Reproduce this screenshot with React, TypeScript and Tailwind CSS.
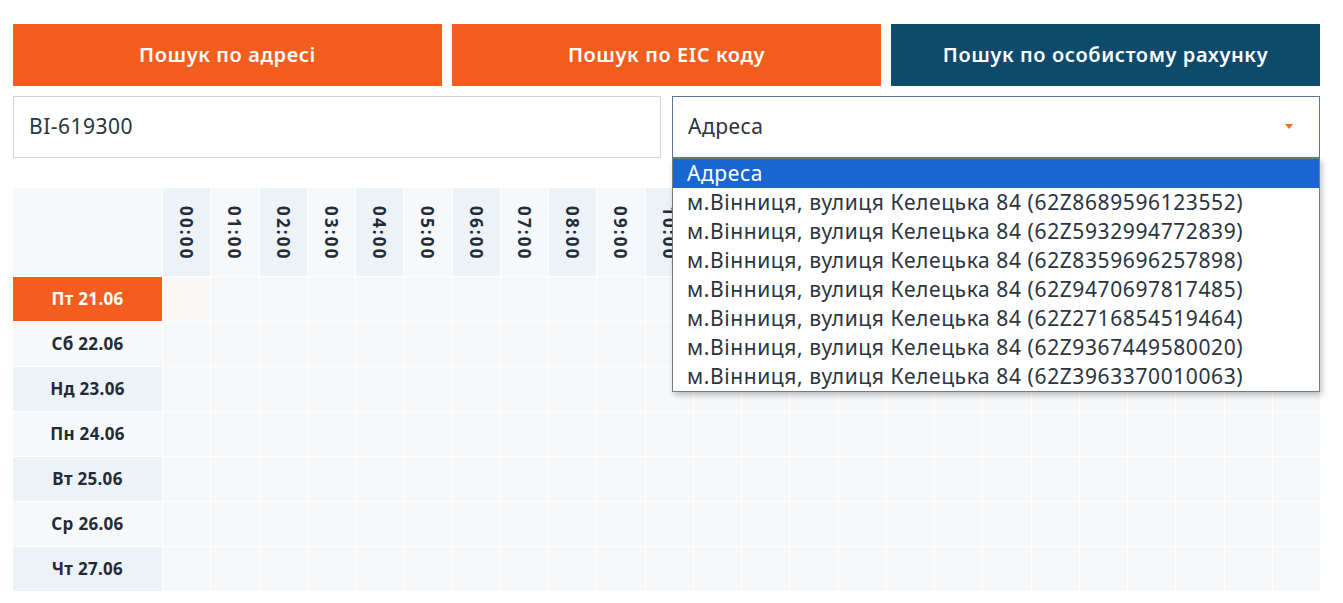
import React from "react";

const hours = Array.from({length: 24}, (_, i) => `${String(i).padStart(2, "0")}:00`);

const days = ["Пт 21.06", "Сб 22.06", "Нд 23.06", "Пн 24.06", "Вт 25.06", "Ср 26.06", "Чт 27.06"];

const addresses = [
    "62Z8689596123552",
    "62Z5932994772839",
    "62Z8359696257898",
    "62Z9470697817485",
    "62Z2716854519464",
    "62Z9367449580020",
    "62Z3963370010063",
];

const font = {fontFamily: '"Noto Sans", "Open Sans", sans-serif'};

export default function App() {
    return (
        <div className="min-h-[603px] bg-white text-[#2b3440]" style={font}>
            <div className="ml-[13px] w-[1307px] pt-[24px]">
                {/* Кнопки пошуку */}
                <div className="grid grid-cols-3 gap-[10px]">
                    <button className="h-[62px] bg-[#f35e1e] text-white text-[20px] tracking-[0.6px] font-semibold">
                        Пошук по адресі
                    </button>
                    <button className="h-[62px] bg-[#f35e1e] text-white text-[20px] tracking-[0.6px] font-semibold">
                        Пошук по EIC коду
                    </button>
                    <button className="h-[62px] bg-[#0d4b6d] text-white text-[20px] tracking-[0.6px] font-semibold">
                        Пошук по особистому рахунку
                    </button>
                </div>

                {/* Поля вводу */}
                <div className="mt-[10px] grid grid-cols-2 gap-[11px]">
                    <div className="h-[62px] border border-[#d4d4d4] flex items-center px-[15px] text-[21px] tracking-[0.5px] text-[#2b3440]">
                        BI-619300
                    </div>
                    <div className="relative">
                        <div className="h-[62px] border border-[#5b7690] flex items-center justify-between px-[15px] text-[21px] tracking-[0.5px] text-[#2b3440]">
                            <span>Адреса</span>
                            <svg width="10" height="6" viewBox="0 0 10 6" className="mr-[10px]">
                                <path d="M1 0 L9 0 L5 5 Z" fill="#ee6a2a"/>
                            </svg>
                        </div>
                        <div className="absolute left-0 right-0 top-[62px] z-10 bg-white border border-[#7a7a7a] shadow-[2px_3px_6px_rgba(0,0,0,0.25)] text-[21px] tracking-[0.6px] leading-[29px] text-[#2b3440]">
                            <div className="bg-[#1a66d1] text-white px-[14px]">Адреса</div>
                            {addresses.map((code) => (
                                <div key={code} className="px-[14px] whitespace-nowrap">
                                    м.Вінниця, вулиця Келецька 84 ({code})
                                </div>
                            ))}
                        </div>
                    </div>
                </div>

                {/* Графік */}
                <div className="mt-[30px] grid grid-cols-[149px_repeat(24,minmax(0,1fr))] gap-px bg-white">
                    <div className="h-[88px] bg-[#f6f8fa]"/>
                    {hours.map((h, i) => (
                        <div
                            key={h}
                            className={`h-[88px] flex justify-center pt-[18px] ${i % 2 === 0 ? "bg-[#edf2f6]" : "bg-[#f6f8fa]"}`}
                        >
                            <span className="text-[17px] tracking-[2.2px] font-bold text-[#222b36] [writing-mode:vertical-rl] leading-none">
                                {h}
                            </span>
                        </div>
                    ))}
                    {days.map((d, r) => (
                        <React.Fragment key={d}>
                            <div
                                className={`h-[44px] flex items-center justify-center text-[17px] tracking-[0.3px] font-bold ${
                                    r === 0
                                        ? "bg-[#f35e1e] text-white"
                                        : r % 2 === 1
                                            ? "bg-[#f6f8fa] text-[#222b36]"
                                            : "bg-[#edf2f6] text-[#222b36]"
                                }`}
                            >
                                {d}
                            </div>
                            {hours.map((h, c) => (
                                <div
                                    key={h}
                                    className={`h-[44px] ${r === 0 && c === 0 ? "bg-[#faf9f7]" : "bg-[#f6f8fa]"}`}
                                />
                            ))}
                        </React.Fragment>
                    ))}
                </div>
            </div>
        </div>
    );
}
